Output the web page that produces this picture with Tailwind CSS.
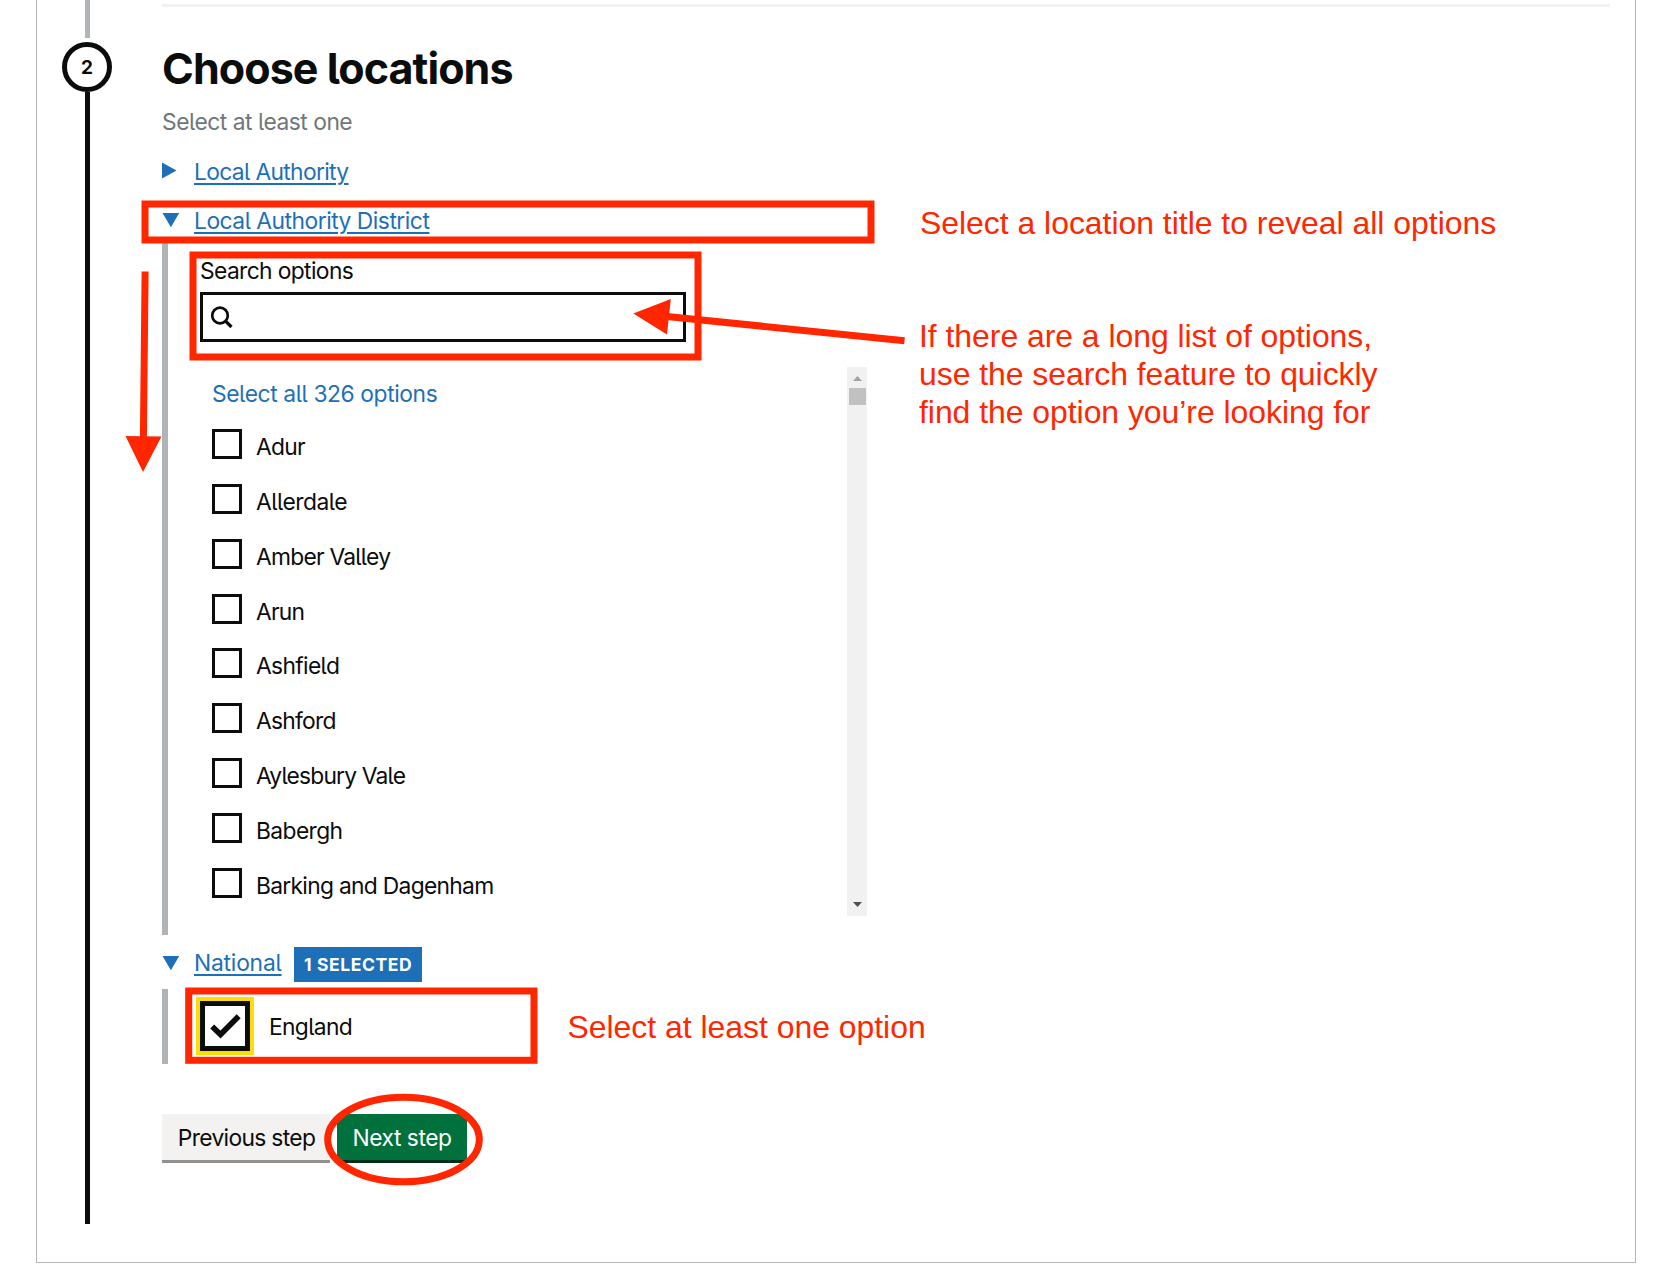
<!DOCTYPE html>
<html lang="en">
<head>
<meta charset="utf-8">
<title>Choose locations</title>
<script src="https://cdn.jsdelivr.net/npm/@tailwindcss/browser@4"></script>
</head>
<body class="bg-white">
<div class="relative h-[1286px] w-[1674px] overflow-hidden bg-white font-['Inter',sans-serif] text-[22.8px] leading-[30px] tracking-[-0.75px] whitespace-nowrap text-[#0b0c0c] [font-feature-settings:'cv05']">

  <main class="ml-9 flex h-[1263px] w-[1600px] border border-t-0 border-[#b5b7b9]">
    <!-- Step marker -->
    <div class="flex w-[125px] shrink-0 flex-col pl-[25px]">
      <div class="flex w-[51px] flex-col items-center">
        <div class="h-[38px] w-[5px] bg-[#b1b4b6]"></div>
        <div class="mt-1 mr-px flex size-[50px] items-center justify-center rounded-full border-[5px] border-[#0b0c0c] pt-0.5 text-[19px] font-bold tracking-normal">2</div>
        <div class="h-[1132px] w-[5px] bg-[#0b0c0c]"></div>
      </div>
    </div>

    <!-- Step content -->
    <section class="flex w-[1448px] flex-col pt-1">
      <div class="h-[3px] shrink-0 bg-[#f2f2f2]"></div>
      <h2 class="mt-[36px] text-[43px] leading-[50px] font-bold tracking-[-0.92px]">Choose locations</h2>
      <p class="mt-[14px] tracking-[-0.48px] text-[#6f777b]">Select at least one</p>

      <div class="mt-5 flex text-[#1d70b8]">
        <svg class="mt-[5px] h-[17px] w-8" viewBox="0 0 32 17"><path d="M0 .5 14.5 8.6 0 16.6Z" fill="#1d70b8"/></svg>
        <a class="tracking-[-0.65px] underline decoration-[1.5px] underline-offset-[3px]">Local Authority</a>
      </div>

      <div class="mt-[19px] flex text-[#1d70b8]">
        <svg class="mt-[7px] h-[15px] w-8" viewBox="0 0 32 15"><path d="M.5 0H17.2L8.9 14.3Z" fill="#1d70b8"/></svg>
        <a class="tracking-[-0.49px] underline decoration-[1.5px] underline-offset-[3px]">Local Authority District</a>
      </div>

      <div class="mt-[5px] flex h-[694px] w-[705px] flex-col border-l-[6px] border-[#b1b4b6] pt-[15px] pl-8">
        <label class="tracking-[-0.62px]">Search options</label>
        <div class="mt-[6px] flex h-[50px] w-[486px] items-center border-[3px] border-[#0b0c0c] pl-[7px]">
          <svg class="size-[23px]" viewBox="0 0 23 23" fill="none" stroke="#0b0c0c"><circle cx="10" cy="9.5" r="7.8" stroke-width="2.7"/><path d="m15.3 14.8 6.2 6.2" stroke-width="3.2"/></svg>
        </div>
        <div class="mt-[25px] flex h-[549px] w-[667px]">
          <div class="flex w-[647px] flex-col pt-3 pl-3">
            <span class="mb-[7.9px] tracking-[-0.4px] text-[#1d70b8]">Select all 326 options</span>
            <div class="flex h-[54.8px] items-center gap-[14px]"><i class="size-[30px] border-[3px] border-[#0b0c0c]"></i><span class="mt-[6px]">Adur</span></div>
            <div class="flex h-[54.8px] items-center gap-[14px]"><i class="size-[30px] border-[3px] border-[#0b0c0c]"></i><span class="mt-[6px] tracking-[-0.5px]">Allerdale</span></div>
            <div class="flex h-[54.8px] items-center gap-[14px]"><i class="size-[30px] border-[3px] border-[#0b0c0c]"></i><span class="mt-[6px]">Amber Valley</span></div>
            <div class="flex h-[54.8px] items-center gap-[14px]"><i class="size-[30px] border-[3px] border-[#0b0c0c]"></i><span class="mt-[6px]">Arun</span></div>
            <div class="flex h-[54.8px] items-center gap-[14px]"><i class="size-[30px] border-[3px] border-[#0b0c0c]"></i><span class="mt-[6px] tracking-[-0.65px]">Ashfield</span></div>
            <div class="flex h-[54.8px] items-center gap-[14px]"><i class="size-[30px] border-[3px] border-[#0b0c0c]"></i><span class="mt-[6px]">Ashford</span></div>
            <div class="flex h-[54.8px] items-center gap-[14px]"><i class="size-[30px] border-[3px] border-[#0b0c0c]"></i><span class="mt-[6px] tracking-[-0.82px]">Aylesbury Vale</span></div>
            <div class="flex h-[54.8px] items-center gap-[14px]"><i class="size-[30px] border-[3px] border-[#0b0c0c]"></i><span class="mt-[6px] tracking-[-0.6px]">Babergh</span></div>
            <div class="flex h-[54.8px] items-center gap-[14px]"><i class="size-[30px] border-[3px] border-[#0b0c0c]"></i><span class="mt-[6px] tracking-[-0.7px]">Barking and Dagenham</span></div>
          </div>
          <!-- Scrollbar -->
          <div class="flex w-5 flex-col items-center bg-[#f1f1f1] pt-[9px] pb-[9px]">
            <svg class="h-[5px] w-[9px]" viewBox="0 0 9 5"><path d="M4.5 0 9 5H0Z" fill="#a3a3a3"/></svg>
            <div class="mt-[7px] h-[17px] w-[17px] bg-[#c1c1c1]"></div>
            <svg class="mt-auto h-[5px] w-[9px]" viewBox="0 0 9 5"><path d="M0 0H9L4.5 5Z" fill="#505050"/></svg>
          </div>
        </div>
      </div>

      <div class="mt-3 flex h-[35px] text-[#1d70b8]">
        <svg class="mt-[9px] h-[15px] w-8" viewBox="0 0 32 15"><path d="M.5 0H17.2L8.9 14.3Z" fill="#1d70b8"/></svg>
        <div class="w-[100px] pt-px"><a class="tracking-[-0.2px] underline decoration-[1.5px] underline-offset-[3px]">National</a></div>
        <strong class="w-32 bg-[#1d70b8] pl-[10px] text-[17.5px] leading-[36px] font-bold tracking-[0.6px] text-white">1 SELECTED</strong>
      </div>

      <div class="mt-[7px] flex h-[75px] gap-[19px] border-l-[6px] border-[#b1b4b6] pt-3 pl-8">
        <span class="flex size-[50px] items-center justify-center border-[5px] border-[#0b0c0c] outline-4 outline-[#ffdd00]">
          <svg class="size-10 shrink-0" viewBox="0 0 40 40"><path d="m7.2 20.5 8.3 8L33.7 10.2" fill="none" stroke="#0b0c0c" stroke-width="5.6"/></svg>
        </span>
        <span class="leading-[52px] tracking-[-0.65px]">England</span>
      </div>

      <div class="mt-[50px] flex gap-[7px]">
        <button class="h-[46px] w-[168px] bg-[#f3f2f1] pt-0.5 pl-px tracking-[-0.66px] shadow-[0_3px_0_#929191]">Previous step</button>
        <button class="h-[46px] w-[130px] bg-[#00703c] pt-0.5 tracking-[-0.45px] text-white shadow-[0_3px_0_#002d18]">Next step</button>
      </div>
    </section>
  </main>

  <!-- Callouts drawn over the form -->
  <svg class="absolute inset-0 h-[1286px] w-[1674px]" viewBox="0 0 1674 1286" fill="none" stroke="#ff2600" stroke-width="7">
    <rect x="145" y="204" width="726" height="36"/>
    <rect x="193" y="255" width="505" height="102"/>
    <rect x="188.7" y="991" width="345.3" height="69.3"/>
    <ellipse cx="403.5" cy="1139.5" rx="75.8" ry="42.3"/>
    <path d="M145.1 271.5 143.4 438M904.5 340.7 667 316.5"/>
    <path d="M125.5 436 161.5 436.5 143 472ZM633.3 313.5 670.8 299 667 334.5Z" fill="#ff2600" stroke="none"/>
  </svg>
  <div class="absolute inset-0 font-['Liberation_Sans',Arial,sans-serif] text-[31.9px] leading-[38px] tracking-normal text-[#ff2600]">
    <p class="absolute top-[204px] left-[920px]">Select a location title to reveal all options</p>
    <p class="absolute top-[317px] left-[919px] tracking-[-0.02px]">If there are a long list of options,<br>use the search feature to quickly<br>find the option you’re looking for</p>
    <p class="absolute top-[1008px] left-[567.5px]">Select at least one option</p>
  </div>
</div>
</body>
</html>
